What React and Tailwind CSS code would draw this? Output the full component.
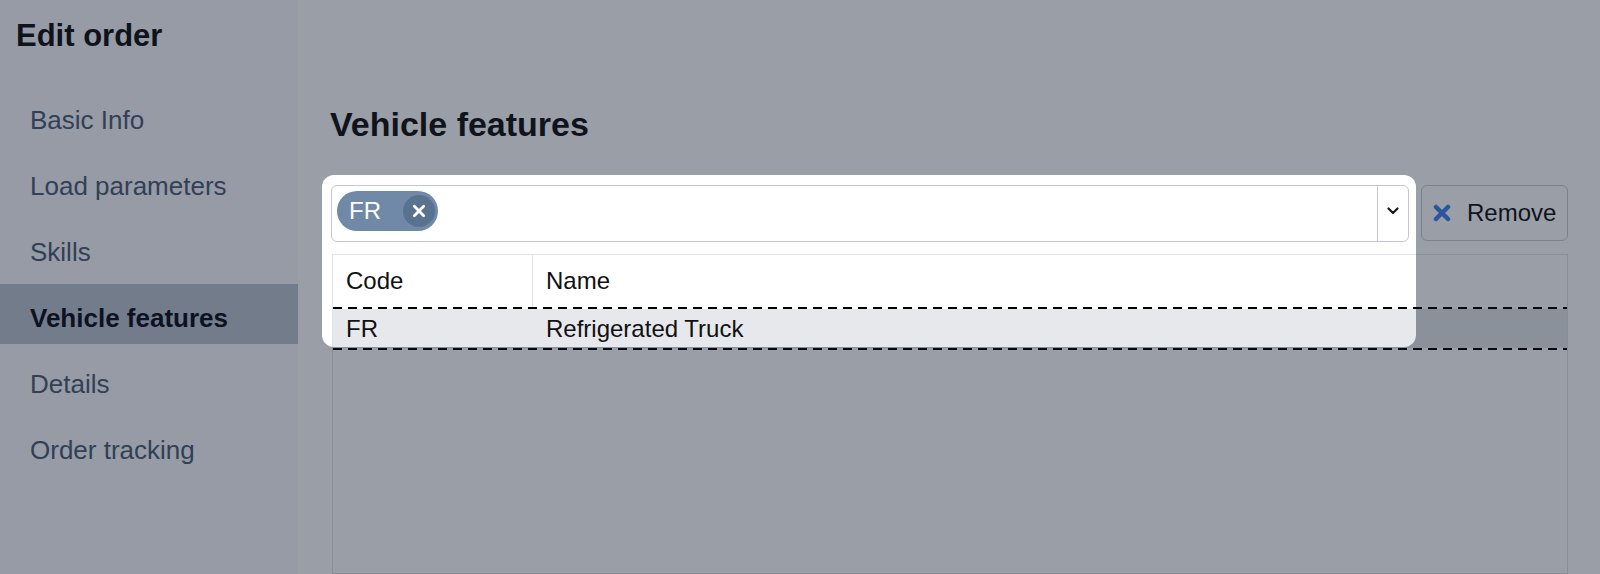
import React from "react";

const navItems = ["Basic Info", "Load parameters", "Skills", "Vehicle features", "Details", "Order tracking"];

const Cross = ({ className, width = 3 }) => (
    <svg viewBox="0 0 12 12" className={className} fill="none" stroke="currentColor" strokeWidth={width} strokeLinecap="round">
        <path d="M2 2l8 8M10 2l-8 8" />
    </svg>
);

const App = () => {
    const active = "Vehicle features";

    return (
        <div className="relative flex h-[574px] w-[1600px] overflow-hidden bg-white font-['Liberation_Sans',Arial,sans-serif] text-[#111]">
            {/* sidebar */}
            <aside className="flex w-[298px] shrink-0 flex-col bg-[#f8fafd]">
                <h1 className="pl-4 pt-[20px] text-[31px] font-bold leading-none">Edit order</h1>
                <nav className="mt-[35px] flex flex-col gap-[6px]">
                    {navItems.map((item) => (
                        <div
                            key={item}
                            className={
                                item === active
                                    ? "flex h-[60px] items-center bg-[#bcc4d1] pl-[30px] pt-2 text-[26px] font-bold leading-none text-[#0b0f1a]"
                                    : "flex h-[60px] items-center pl-[30px] pt-2 text-[26px] leading-none text-[#4d5e78]"
                            }
                        >
                            {item}
                        </div>
                    ))}
                </nav>
            </aside>

            {/* main */}
            <main className="flex flex-1 flex-col pl-[33px] pr-[32px]">
                <h2 className="-ml-px pt-[107px] text-[34px] font-bold leading-none">Vehicle features</h2>

                <div className="mt-[44px] flex items-start gap-3">
                    <div className="flex h-[57px] flex-1 rounded-[6px] border-[1.5px] border-[#c6c6ce] bg-white">
                        <div className="flex flex-1 items-center pb-[6px] pl-[5px]">
                            <span className="flex h-[40px] w-[101px] items-center justify-between rounded-full bg-[#6f89a7] pl-[12px] pr-[3px] text-[24px] leading-none text-white">
                                FR
                                <span className="flex h-[32px] w-[32px] items-center justify-center rounded-full bg-[#58728f]">
                                    <Cross className="h-[14px] w-[14px]" width={2.4} />
                                </span>
                            </span>
                        </div>
                        <div className="flex w-[31px] items-center justify-center border-l-[1.5px] border-[#c6c6ce] pb-[6px]">
                            <svg viewBox="0 0 12 8" className="h-[8px] w-[12px]" fill="none" stroke="#1a1a1a" strokeWidth="2.2" strokeLinecap="round" strokeLinejoin="round">
                                <path d="M1.5 1.5L6 6l4.5-4.5" />
                            </svg>
                        </div>
                    </div>
                    <button className="flex h-[56px] w-[147px] items-center gap-4 rounded-[6px] border-[1.5px] border-[#caced4] bg-white pl-[11px] text-[24px] leading-none text-[#111]">
                        <Cross className="h-[18px] w-[18px] text-[#4284ee]" width={3} />
                        Remove
                    </button>
                </div>

                <div className="ml-px mt-[12px] flex flex-1 flex-col border border-[#e0e3e7]">
                    <div className="grid h-[52px] grid-cols-[200px_1fr] text-[24px] leading-none">
                        <div className="flex items-center border-r border-[#e0e3e7] pl-[13px]">Code</div>
                        <div className="flex items-center pl-[13px]">Name</div>
                    </div>
                    <div className="h-[2px] bg-[repeating-linear-gradient(90deg,#000_0_9px,transparent_9px_15px)]" />
                    <div className="grid h-[39px] grid-cols-[200px_1fr] bg-[#e6e8ec] text-[24px] leading-none">
                        <div className="flex items-center pl-[13px]">FR</div>
                        <div className="flex items-center pl-[13px]">Refrigerated Truck</div>
                    </div>
                    <div className="h-[2px] bg-[repeating-linear-gradient(90deg,#000_0_9px,transparent_9px_15px)]" />
                </div>
            </main>

            {/* spotlight overlay */}
            <div className="pointer-events-none absolute left-[322px] top-[175px] h-[172px] w-[1094px] rounded-[12px] shadow-[0_0_0_3000px_rgba(15,23,42,0.42)]" />
        </div>
    );
};

export default App;
